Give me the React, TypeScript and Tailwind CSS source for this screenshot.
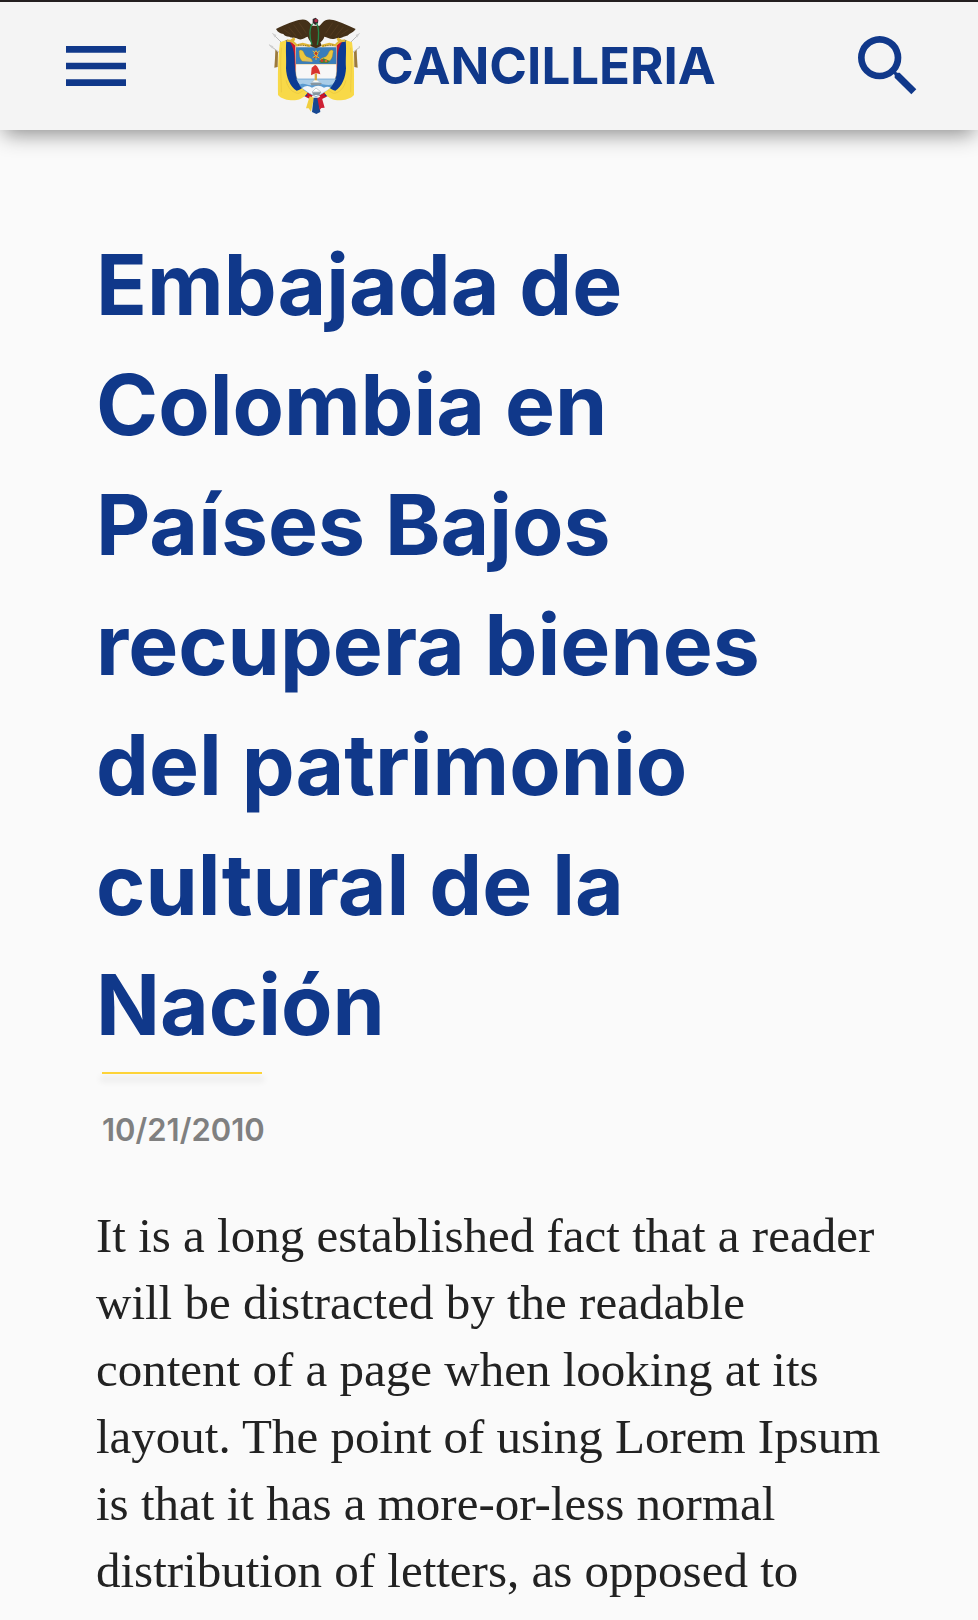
import { MdMenu, MdSearch } from "react-icons/md";

function FlagSide() {
  return (
    <g>
      <path d="M38 86 L66 114 M28 120 L60 144" stroke="#b9b9b9" strokeWidth="3" />
      <path d="M36 84 L49 90 L45 98 Z M26 118 L40 124 L37 131 Z" fill="#cfcfcf" />
      <path d="M46 134 L54 142 L53 186 L43 188 L45 160 Z" fill="#9c7a3c" />
      <path d="M84 104 L106 120 C108 150 106 186 113 208 C122 230 140 246 166 262 L150 282 C120 270 92 240 88 200 Z" fill="#c8152b" />
      <path d="M76 106 L84 104 C98 120 105 140 104 178 C106 214 122 232 140 254 L142 272 L112 276 C88 262 70 220 74 170 Z" fill="#0c3b93" />
      <path d="M60 112 L79 105 C76 140 80 160 78 190 C79 216 90 246 110 257 C120 255 126 250 132 244 L146 257 C140 272 122 285 104 286 C86 287 64 282 54 270 C54 230 52 170 60 112 Z" fill="#f8d948" />
      <path d="M64 128 C60 180 64 230 64 262 M78 226 C84 250 98 264 116 265 L138 252" fill="none" stroke="#e3bd38" strokeWidth="1.5" />
    </g>
  );
}

function Crest() {
  return (
    <svg viewBox="24 36 276 294" className="h-[98px] w-[92px] shrink-0" role="img" aria-label="Escudo de Colombia">
      <FlagSide />
      <g transform="translate(336 0) scale(-1 1)">
        <FlagSide />
      </g>
      {/* shield */}
      <path d="M107 126 H230 V198 C230 236 198 262 168 276 C138 262 107 236 107 198 Z" fill="#f7f7f7" stroke="#c9a04a" strokeWidth="1" />
      <path d="M108 127 H229 V177 H108 Z" fill="#397dbb" />
      <path d="M108 178 H229" stroke="#d6a83c" strokeWidth="1" />
      <path d="M110 222 H227 C218 246 194 264 168 275 C142 264 118 246 110 222 Z" fill="#a9cde8" />
      <path d="M108 222 H229" stroke="#5b9bd0" strokeWidth="2" />
      <path d="M118 240 C132 230 144 244 156 240 C174 230 198 246 219 238 C212 250 196 262 168 275 C142 264 128 254 118 240 Z" fill="#5b9bd0" />
      <path d="M126 249 Q142 237 156 248 Q175 237 192 248 Q204 243 211 248 C200 258 184 266 168 274 C151 266 138 259 126 249 Z" fill="#f3f6f8" />
      <path d="M151 234 L154 241 H180 L186 234 Z M156 262 L160 270 H178 L184 261 Z" fill="#8796a0" />
      <path d="M155 232 L167 222 L181 232 Z M156 261 L168 249 L183 261 Z" fill="#fff" stroke="#aeb9c0" strokeWidth="2" />
      {/* horns of plenty and pomegranate */}
      <path d="M121 135 C132 134 131 149 140 155 C148 158 157 160 157 168 L128 169 C116 160 119 147 117 138 Z M216 135 C205 134 207 149 197 155 C189 158 179 160 180 168 L207 169 C220 160 217 147 220 138 Z" fill="#ecc63e" stroke="#9f8428" strokeWidth="1" />
      <path d="M130 168 L143 160 L159 171 Z" fill="#d8bd68" />
      <path d="M177 169 L190 160 L210 168 L203 174 H183 Z" fill="#45813b" />
      <circle cx="186" cy="167" r="4" fill="#cb392e" />
      <circle cx="198" cy="168" r="4" fill="#d4682f" />
      <path d="M168 137 L174 145 L169 155 L162 145 Z M168 155 V165 M158 138 L165 143 M179 138 L172 143 M158 158 L167 152 L178 159" fill="#bd3b25" stroke="#e5bd3b" strokeWidth="3" />
      {/* liberty cap on its lance */}
      <path d="M164 205 H171 V226 H164 Z" fill="#d8aa43" />
      <path d="M155 188 C160 186 161 181 166 180 C173 184 178 194 181 208 L168 204 L153 211 Z" fill="#d9332f" />
      {/* condor */}
      <path d="M48 72 C66 63 95 50 116 45 C132 41 143 44 150 55 L157 62 L179 62 L187 53 C198 40 214 42 232 49 C251 56 270 65 287 72 C281 82 273 84 268 87 C262 95 254 93 249 96 C240 102 232 96 225 101 C212 106 202 95 193 95 C191 104 185 108 181 112 L185 122 L168 130 L150 122 L155 112 C148 108 146 102 143 95 C135 96 126 108 113 101 C106 96 96 101 88 95 C79 94 74 93 70 87 C60 86 54 82 48 72 Z" fill="#443018" />
      <path d="M72 74 L92 88 M86 66 L109 94 M101 59 L125 92 M117 53 L139 85 M265 74 L244 88 M250 66 L227 94 M235 59 L211 92 M218 53 L197 85" stroke="#5a4022" strokeWidth="2" />
      <path d="M158 42 L167 38 L175 45 L174 55 L166 60 L158 54 Z" fill="#34282b" />
      <circle cx="168" cy="47" r="5" fill="#b52c49" />
      <path d="M158 56 C148 68 147 98 156 119 M169 54 C177 66 178 96 172 120" fill="none" stroke="#23894a" strokeWidth="4" />
      {/* ribbon */}
      <path d="M80 107 L92 108 L103 100 L98 110 L110 121 L128 117 L151 123 M185 123 L208 117 L226 121 L238 110 L233 100 L244 108 L256 107" fill="none" stroke="#dfb638" strokeWidth="7" />
      <path d="M114 120 L149 123 M188 123 L220 120" stroke="#5b4c1e" strokeWidth="2" strokeDasharray="4 3" />
      {/* knot at the foot */}
      <path d="M149 274 L162 278 L153 320 L146 310 L138 310 Z" fill="#f1ce3f" />
      <path d="M161 278 H175 L181 321 L169 327 L156 321 Z" fill="#174891" />
      <path d="M172 280 L184 273 L194 308 L184 309 L179 315 Z" fill="#ce2034" />
    </svg>
  );
}

const bodyLines = [
  "It is a long established fact that a reader",
  "will be distracted by the readable",
  "content of a page when looking at its",
  "layout. The point of using Lorem Ipsum",
  "is that it has a more-or-less normal",
  "distribution of letters, as opposed to",
];

const titleLines = [
  "Embajada de",
  "Colombia en",
  "Países Bajos",
  "recupera bienes",
  "del patrimonio",
  "cultural de la",
  "Nación",
];

export default function App() {
  return (
    <div className="flex h-screen flex-col overflow-hidden bg-[#fafafa] font-['Inter',sans-serif]">
      <header className="relative z-10 flex h-[130px] shrink-0 items-center justify-between border-t-2 border-[#231f20] bg-[#f4f4f4] pr-[50px] pl-14 text-[#10388a] shadow-[0_8px_20px_-4px_rgba(0,0,0,0.45)]">
        <button type="button" aria-label="Menú">
          <MdMenu size={80} />
        </button>
        <a href="#" className="flex items-center gap-4">
          <Crest />
          <span className="text-[51px] font-bold">CANCILLERIA</span>
        </a>
        <button type="button" aria-label="Buscar">
          <MdSearch size={80} />
        </button>
      </header>
      <main className="min-h-0 flex-1 overflow-y-auto px-24 pt-[95px] [scrollbar-width:none]">
        <h1 className="text-[84px] leading-[120px] font-bold text-[#10388a]">
          {titleLines.map((line) => (
            <span key={line} className="block whitespace-nowrap">{line} </span>
          ))}
        </h1>
        <div className="mt-[7px] ml-1.5 h-0.5 w-40 bg-[#fdd338] shadow-[0_6px_6px_2px_rgba(0,0,0,0.06)]" />
        <time dateTime="2010-10-21" className="mt-8 ml-1.5 block text-[31px] leading-12 font-semibold text-[#808080]">
          10/21/2010
        </time>
        <p className="mt-12 font-['Liberation_Serif',serif] text-[49px] leading-[67px] text-[#222222]">
          {bodyLines.map((line) => (
            <span key={line} className="block whitespace-nowrap">{line} </span>
          ))}
        </p>
      </main>
    </div>
  );
}
